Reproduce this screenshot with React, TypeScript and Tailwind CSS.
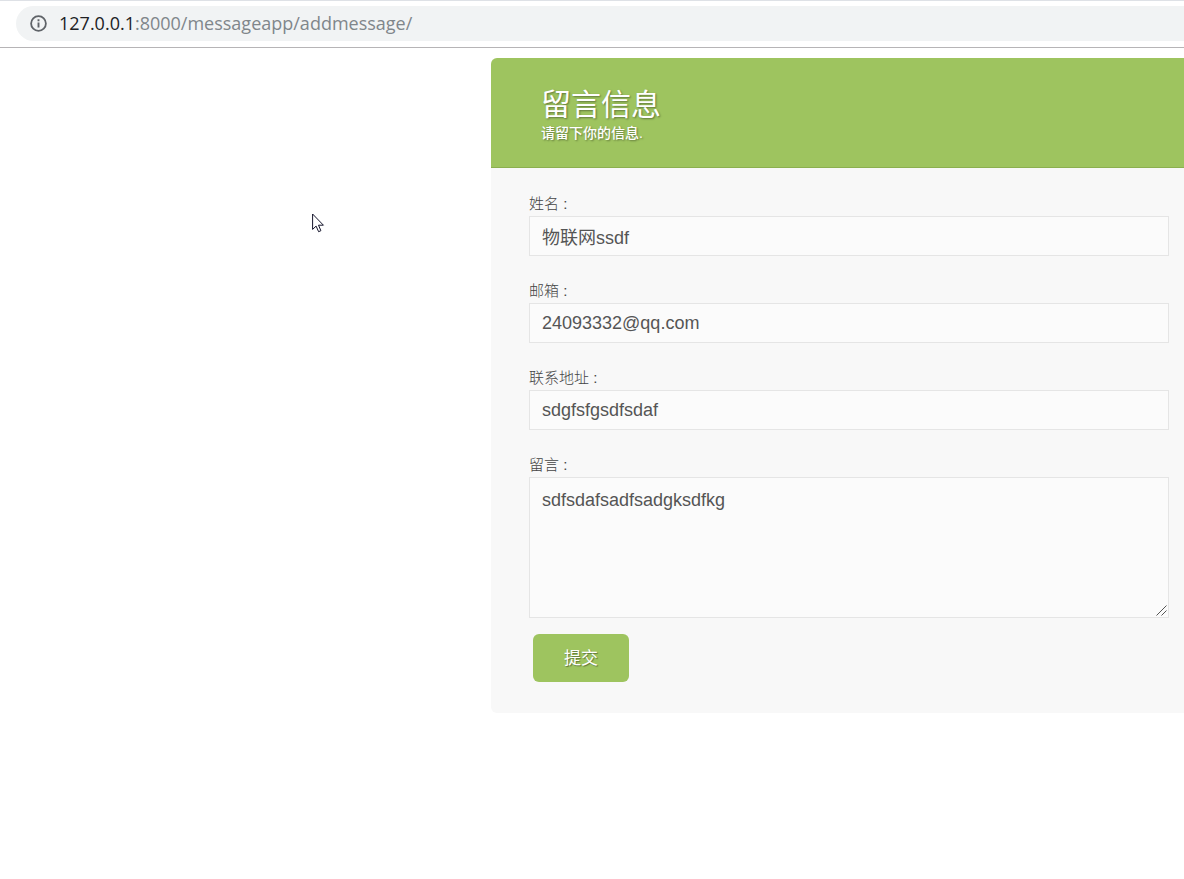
import { useState } from 'react';

const fields = [
  { id: 'name', label: '姓名 :', type: 'text', value: '物联网ssdf' },
  { id: 'email', label: '邮箱 :', type: 'email', value: '24093332@qq.com' },
  { id: 'address', label: '联系地址 :', type: 'text', value: 'sdgfsfgsdfsdaf' },
];

const labelClass = 'block h-6 text-[15px] leading-6 font-light text-[#444444]';
const controlClass =
  'block w-full border border-[#e5e5e5] bg-[#fbfbfb] px-3 text-lg text-[#555555] outline-none';

function AddressBar() {
  return (
    <div className="h-12 border-t border-b border-t-[#dee1e6] border-b-[#b6b4b6] bg-white pt-[5px] pl-4">
      <div className="flex h-[35px] items-center gap-3 rounded-l-full bg-[#f1f3f4] pl-3.5 font-['Open_Sans','Noto_Sans',sans-serif] text-lg">
        {/* Site info icon */}
        <svg width="17" height="17" viewBox="0 0 17 17" fill="none" aria-hidden="true">
          <circle cx="8.5" cy="8.5" r="7.4" stroke="#5f6368" strokeWidth="1.8" />
          <path d="M8.5 7.5v5M8.5 4.3v1.9" stroke="#5f6368" strokeWidth="1.9" />
        </svg>
        <span className="pb-0.5 text-[#202124]">
          127.0.0.1<span className="text-[#80868b]">:8000/messageapp/addmessage/</span>
        </span>
      </div>
    </div>
  );
}

export default function AddMessage() {
  const [values, setValues] = useState<Record<string, string>>({
    name: fields[0].value,
    email: fields[1].value,
    address: fields[2].value,
    message: 'sdfsdafsadfsadgksdfkg',
  });

  const handleChange = (id: string, value: string) => {
    setValues({ ...values, [id]: value });
  };

  return (
    <div className="min-h-screen bg-white font-['Liberation_Sans','Noto_Sans_CJK_SC',sans-serif]">
      <AddressBar />

      {/* Message Form */}
      <main className="pt-2.5 pl-[491px]">
        <div className="overflow-hidden rounded-l-md bg-[#f8f8f8]">
          <header className="h-[110px] border-b border-[#8baf4f] bg-[#9ec45f] pt-[29px] pl-[50px] text-white [text-shadow:1px_1px_2px_rgba(0,0,0,0.4)]">
            <h1 className="text-3xl leading-9">留言信息</h1>
            <p className="text-sm leading-5 font-medium">请留下你的信息.</p>
          </header>

          <form className="pt-6 pr-[15px] pb-[31px] pl-[38px]" onSubmit={(e) => e.preventDefault()}>
            <div className="flex flex-col gap-[23px]">
              {fields.map((field) => (
                <div key={field.id}>
                  <label htmlFor={field.id} className={labelClass}>
                    {field.label}
                  </label>
                  <input
                    id={field.id}
                    type={field.type}
                    value={values[field.id]}
                    onChange={(e) => handleChange(field.id, e.target.value)}
                    className={`${controlClass} h-10`}
                  />
                </div>
              ))}
              <div className="relative">
                <label htmlFor="message" className={labelClass}>
                  留言 :
                </label>
                <textarea
                  id="message"
                  value={values.message}
                  onChange={(e) => handleChange('message', e.target.value)}
                  className={`${controlClass} h-[141px] resize-none py-2`}
                />
                {/* Resize grip */}
                <svg
                  className="pointer-events-none absolute right-0.5 bottom-0.5"
                  width="11"
                  height="11"
                  viewBox="0 0 11 11"
                  aria-hidden="true"
                >
                  <path d="M.5 10.5l10-10M5.5 10.5l5-5" fill="none" stroke="#555" strokeWidth="1" />
                </svg>
              </div>
            </div>
            <button
              type="submit"
              className="mt-4 ml-1 block h-12 w-24 rounded-md bg-[#9ec45f] pt-0.5 text-[17px] text-white [text-shadow:1px_1px_1px_rgba(0,0,0,0.4)]"
            >
              提交
            </button>
          </form>
        </div>
      </main>

      {/* Mouse pointer */}
      <svg
        className="pointer-events-none absolute top-[213px] left-[312px]"
        width="13"
        height="20"
        viewBox="0 0 13 20"
        aria-hidden="true"
      >
        <path
          d="M.6 1v15.4l3.5-3.3 2.5 5.6 2.3-1-2.4-5.5h4.9z"
          fill="#fff"
          stroke="#14142b"
          strokeWidth="1"
        />
      </svg>
    </div>
  );
}
